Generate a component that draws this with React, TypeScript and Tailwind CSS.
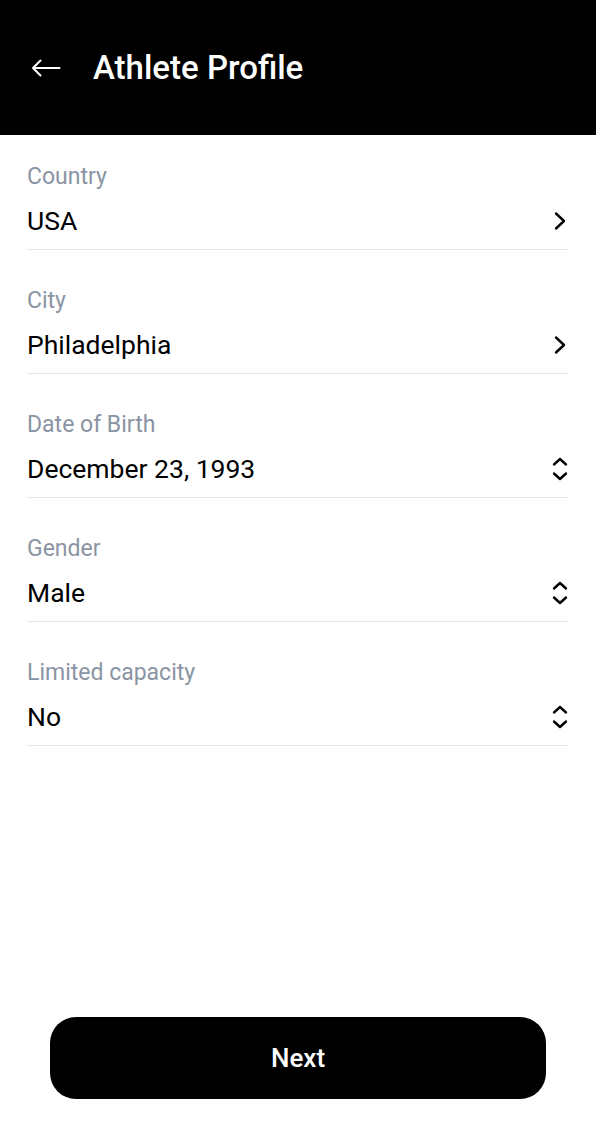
const fields = [
  { label: "Country", value: "USA", kind: "link" },
  { label: "City", value: "Philadelphia", kind: "link" },
  { label: "Date of Birth", value: "December 23, 1993", kind: "select" },
  { label: "Gender", value: "Male", kind: "select" },
  { label: "Limited capacity", value: "No", kind: "select" },
] as const;

const ChevronRight = () => (
  <svg width="14" height="20" viewBox="0 0 14 20" fill="none">
    <path
      d="M3 2.5 L11 10 L3 17.5"
      stroke="#000"
      strokeWidth="2.4"
      strokeLinecap="round"
      strokeLinejoin="round"
    />
  </svg>
);

const ChevronUpDown = () => (
  <svg width="18" height="26" viewBox="0 0 18 26" fill="none">
    <path
      d="M3 8.5 L9 3 L15 8.5 M3 17.5 L9 23 L15 17.5"
      stroke="#000"
      strokeWidth="2.4"
      strokeLinecap="round"
      strokeLinejoin="round"
    />
  </svg>
);

const BackArrow = () => (
  <svg width="30" height="18" viewBox="0 0 30 18" fill="none">
    <path
      d="M28.5 9 H2 M9.5 1.5 L2 9 L9.5 16.5"
      stroke="#fff"
      strokeWidth="2"
      strokeLinecap="round"
      strokeLinejoin="round"
    />
  </svg>
);

const Field = ({
  label,
  value,
  kind,
}: {
  label: string;
  value: string;
  kind: "link" | "select";
}) => {
  return (
    <div className="flex flex-col border-b border-[#e3e6ea] pb-[12px]">
      <div className="text-[23px] leading-[28px] text-[#8a94a3]">{label}</div>
      <div className="mt-[14px] flex items-center justify-between h-[32px]">
        <span className="text-[26.5px] leading-[32px] text-black">{value}</span>
        <span className="flex items-center justify-center w-[24px] -mr-[3px]">
          {kind === "link" ? <ChevronRight /> : <ChevronUpDown />}
        </span>
      </div>
    </div>
  );
};

export default function App() {
  return (
    <div
      className="w-[596px] h-[1136px] bg-white flex flex-col"
      style={{ fontFamily: "Roboto, 'Liberation Sans', sans-serif" }}
    >
      <header className="h-[135px] bg-black flex items-center pl-[31px]">
        <BackArrow />
        <h1 className="ml-[32px] text-white text-[33px] font-medium leading-none">
          Athlete Profile
        </h1>
      </header>

      <main className="flex flex-col gap-[37px] px-[27px] pt-[28px]">
        {fields.map((f) => (
          <Field key={f.label} label={f.label} value={f.value} kind={f.kind} />
        ))}
      </main>

      <div className="mt-auto px-[50px] pb-[37px]">
        <button className="w-full h-[82px] rounded-[26px] bg-black text-white text-[26px] font-medium">
          Next
        </button>
      </div>
    </div>
  );
}
